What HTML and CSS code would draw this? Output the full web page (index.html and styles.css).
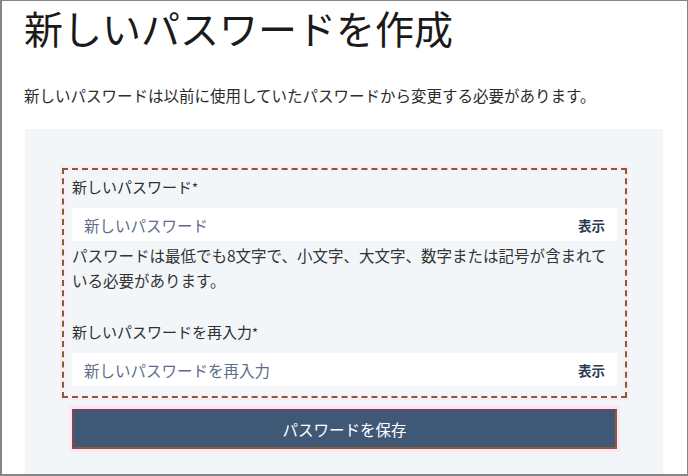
FILE: index.html
```html
<!DOCTYPE html>
<html lang="ja">
<head>
    <meta charset="UTF-8">
    <title>新しいパスワードを作成</title>
    <link rel="stylesheet" href="styles.css">
</head>
<body>
    <div class="frame">
        <h1 class="title">新しいパスワードを作成</h1>
        <p class="lead">新しいパスワードは以前に使用していたパスワードから変更する必要があります。</p>
        <div class="panel">
            <div class="fields">
                <label class="label" for="pw1">新しいパスワード<span class="req">*</span></label>
                <div class="field">
                    <input id="pw1" type="password" placeholder="新しいパスワード">
                    <a href="javascript:;" class="toggle">表示</a>
                </div>
                <p class="hint">パスワードは最低でも8文字で、小文字、大文字、数字または記号が含まれている必要があります。</p>
                <label class="label label-second" for="pw2">新しいパスワードを再入力<span class="req">*</span></label>
                <div class="field">
                    <input id="pw2" type="password" placeholder="新しいパスワードを再入力">
                    <a href="javascript:;" class="toggle">表示</a>
                </div>
            </div>
            <button class="save" type="button">パスワードを保存</button>
        </div>
    </div>
</body>
</html>
```

FILE: styles.css
```css
*{
    padding: 0;
    margin: 0;
    box-sizing: border-box;
}
body{
    font-family: "Noto Sans CJK JP", "Noto Sans", sans-serif;
    color: #333;
    background: #fff;
}
.frame{
    width: 688px;
    height: 476px;
    overflow: hidden;
    border: 1px solid #858585;
    border-left-width: 2px;
    border-bottom-width: 2px;
    padding: 0 24px 0 22px;
}
.title{
    font-size: 39px;
    font-weight: normal;
    line-height: 50px;
    color: #1a1a1a;
    padding-top: 1px;
}
.lead{
    font-size: 15.5px;
    line-height: 24px;
    margin-top: 31px;
    color: #2b2b2b;
}
.panel{
    width: 638px;
    height: 400px;
    margin-left: 1px;
    margin-top: 22px;
    background-color: #f3f6f9;
    padding: 39px 36px 0 37px;
}
.fields{
    border: 2px dashed #7f6035;
    box-shadow: 0 0 0 2px #ffe6f2, inset 0 0 0 2px #fdeef5;
    padding: 5px 8px 10px 8px;
}
.label{
    display: block;
    font-size: 15px;
    line-height: 24px;
    color: #2f2f2f;
}
.label-second{
    margin-top: 27px;
}
.req{
    font-size: 13px;
}
.field{
    display: flex;
    align-items: center;
    height: 33px;
    margin-top: 8px;
    background-color: #fff;
    padding: 0 12px;
}
.field > input{
    flex: 1;
    border: none;
    outline: none;
    background: transparent;
    font-family: inherit;
    font-size: 15.5px;
    color: #333;
}
.field > input::placeholder{
    color: #5e6e88;
}
.toggle{
    font-size: 13.5px;
    font-weight: bold;
    color: #2d3a52;
    text-decoration: none;
}
.hint{
    font-size: 15.5px;
    line-height: 25px;
    margin-top: 2px;
    color: #333;
}
.save{
    display: block;
    width: 545px;
    height: 40px;
    margin: 11px 0 0 10px;
    background-color: #3f5876;
    border: 2px solid;
    border-color: #6f3f6f #8a5c3e #8a5c3e #7b4a58;
    box-shadow: 0 0 0 3px #ffe4f2;
    color: #fff;
    font-family: inherit;
    font-size: 15.5px;
    cursor: pointer;
}
```
